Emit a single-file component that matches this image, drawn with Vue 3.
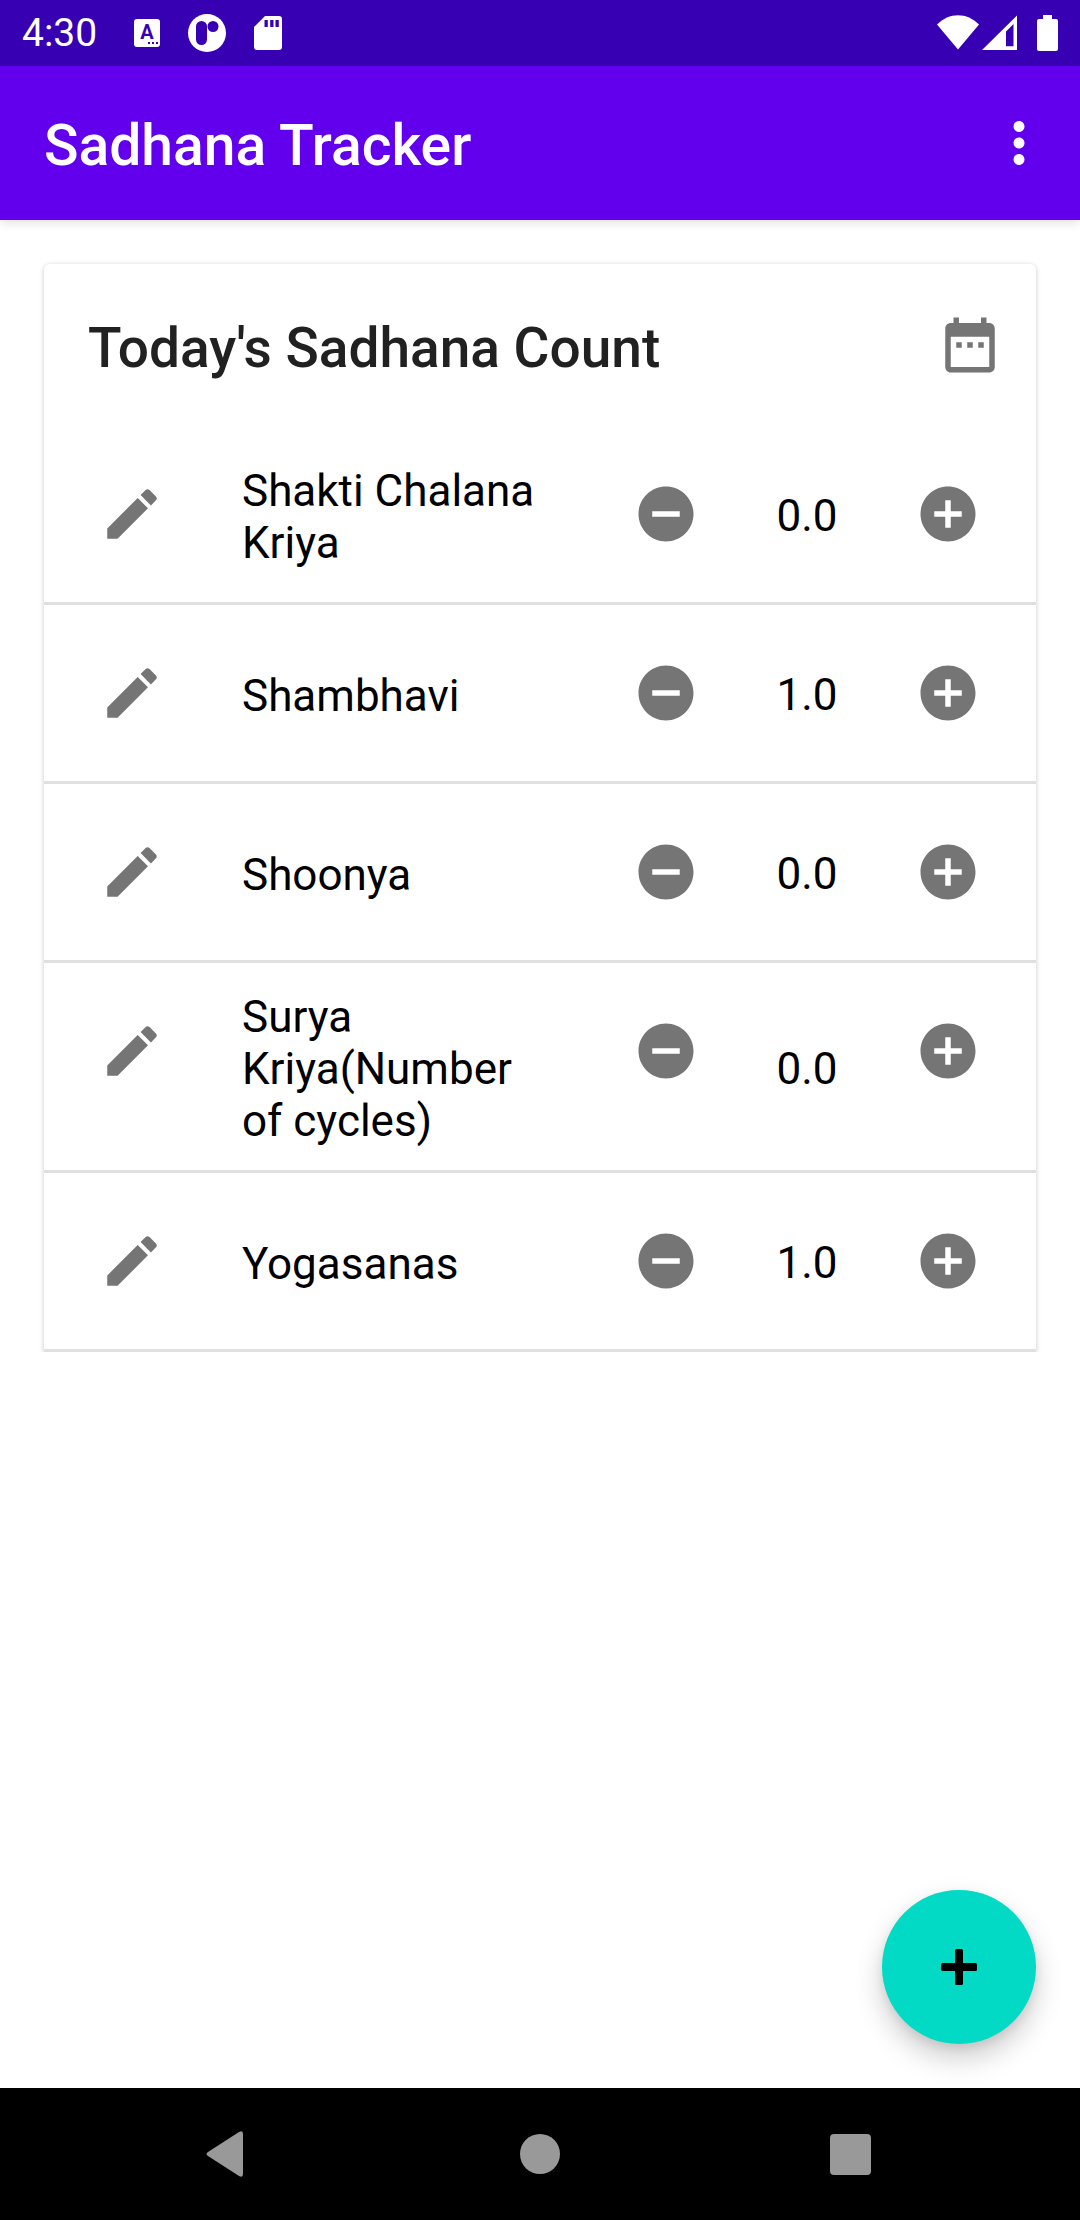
<script setup>
import { ref } from 'vue'

const practices = ref([
  { name: 'Shakti Chalana Kriya', count: 0 },
  { name: 'Shambhavi', count: 1 },
  { name: 'Shoonya', count: 0 },
  { name: 'Surya Kriya(Number of cycles)', count: 0 },
  { name: 'Yogasanas', count: 1 },
])

function change(practice, step) {
  practice.count = Math.max(0, practice.count + step)
}
</script>

<template>
  <div class="screen">
    <header class="top">
      <div class="status">
        <div class="status-left">
          <span class="clock">4:30</span>
          <svg class="letter-icon" width="26" height="28" viewBox="0 0 26 28" aria-hidden="true">
            <rect width="26" height="28" rx="3" fill="#fff" />
            <text x="13" y="20" text-anchor="middle" class="letter">A</text>
            <path d="M14 23h2v2h-2zM18 23h2v2h-2zM22 23h2v2h-2z" fill="#3700b3" />
          </svg>
          <svg class="disc-icon" width="38" height="38" viewBox="0 0 38 38" aria-hidden="true">
            <circle cx="19" cy="19" r="19" fill="#fff" />
            <rect x="8" y="7" width="11" height="24" rx="5.5" fill="#3700b3" />
            <circle cx="25" cy="12.500" r="5.500" fill="#3700b3" />
          </svg>
          <svg width="28" height="34" viewBox="0 0 28 34" aria-hidden="true">
            <path d="M11 0H25a3 3 0 0 1 3 3V31a3 3 0 0 1-3 3H3a3 3 0 0 1-3-3V11zM10.500 4v7h3.300V4zM16.200 4v7h3.300V4zM21.500 4v7h3.300V4z" fill="#fff" fill-rule="evenodd" />
          </svg>
        </div>
        <div class="status-right">
          <svg width="42" height="36" viewBox="0 0 42 36" aria-hidden="true">
            <path d="M0 9.500C12-3 30-3 42 9.500L21 34.500z" fill="#fff" />
          </svg>
          <svg width="35" height="36" viewBox="0 0 35 36" aria-hidden="true">
            <path d="M35 0.500V35H0zM31.500 9L24 16.500V31.300h7.500z" fill="#fff" fill-rule="evenodd" />
          </svg>
          <svg class="battery" width="21" height="36" viewBox="0 0 21 36" aria-hidden="true">
            <path d="M6 0h9v4h4a2 2 0 0 1 2 2V34a2 2 0 0 1-2 2H2a2 2 0 0 1-2-2V6a2 2 0 0 1 2-2h4z" fill="#fff" />
          </svg>
        </div>
      </div>
      <div class="app-bar">
        <h1>Sadhana Tracker</h1>
        <button class="icon-button menu" type="button" aria-label="More options">
          <svg width="66" height="66" viewBox="0 0 24 24"><path d="M12 8c1.100 0 2-.9 2-2s-.9-2-2-2-2 .9-2 2 .9 2 2 2zm0 2c-1.100 0-2 .9-2 2s.9 2 2 2 2-.9 2-2-.9-2-2-2zm0 6c-1.100 0-2 .9-2 2s.9 2 2 2 2-.9 2-2-.9-2-2-2z" /></svg>
        </button>
      </div>
    </header>

    <main>
      <div class="card-area">
        <section class="card">
          <div class="card-head">
            <h2>Today's Sadhana Count</h2>
            <button class="icon-button" type="button" aria-label="Pick a date">
              <svg width="66" height="66" viewBox="0 0 24 24"><path d="M9 11H7v2h2v-2zm4 0h-2v2h2v-2zm4 0h-2v2h2v-2zm2-7h-1V2h-2v2H8V2H6v2H5c-1.110 0-1.990.9-1.990 2L3 20c0 1.100.89 2 2 2h14c1.100 0 2-.9 2-2V6c0-1.100-.9-2-2-2zm0 16H5V9h14v11z" /></svg>
            </button>
          </div>
          <ul>
            <li v-for="practice in practices" :key="practice.name">
              <button class="icon-button cell" type="button" :aria-label="'Edit ' + practice.name">
                <svg width="66" height="66" viewBox="0 0 24 24"><path d="M3 17.250V21h3.750L17.810 9.940l-3.750-3.750L3 17.250zM20.710 7.040c.39-.39.39-1.020 0-1.410l-2.340-2.340c-.39-.39-1.020-.39-1.410 0l-1.830 1.830 3.750 3.750 1.830-1.830z" /></svg>
              </button>
              <span class="name">{{ practice.name }}</span>
              <button class="icon-button cell" type="button" aria-label="Decrease" @click="change(practice, -1)">
                <svg width="66" height="66" viewBox="0 0 24 24"><path d="M12 2C6.480 2 2 6.480 2 12s4.480 10 10 10 10-4.480 10-10S17.520 2 12 2zm5 11H7v-2h10v2z" /></svg>
              </button>
              <output class="count">{{ practice.count.toFixed(1) }}</output>
              <button class="icon-button cell" type="button" aria-label="Increase" @click="change(practice, 1)">
                <svg width="66" height="66" viewBox="0 0 24 24"><path d="M12 2C6.480 2 2 6.480 2 12s4.480 10 10 10 10-4.480 10-10S17.520 2 12 2zm5 11h-4v4h-2v-4H7v-2h4V7h2v4h4v2z" /></svg>
              </button>
            </li>
          </ul>
        </section>
      </div>
      <button class="fab" type="button" aria-label="Add practice">
        <svg width="36" height="36" viewBox="0 0 36 36">
          <rect x="14" width="8" height="36" rx="1.500" />
          <rect y="14" width="36" height="8" rx="1.500" />
        </svg>
      </button>
    </main>

    <nav class="system-nav">
      <button class="icon-button" type="button" aria-label="Back">
        <svg width="66" height="66" viewBox="0 0 66 66"><path d="M46 13v40q0 4-4 2L11 35q-3-2 0-4L42 11q4-2 4 2z" /></svg>
      </button>
      <button class="icon-button" type="button" aria-label="Home">
        <svg width="66" height="66" viewBox="0 0 66 66"><circle cx="33" cy="33" r="20" /></svg>
      </button>
      <button class="icon-button" type="button" aria-label="Recent apps">
        <svg width="66" height="66" viewBox="0 0 66 66"><rect x="13" y="13" width="41" height="41" rx="4" /></svg>
      </button>
    </nav>
  </div>
</template>

<style>
body {
  margin: 0;
  background: #fff;
}
</style>

<style scoped>
.screen {
  display: flex;
  flex-direction: column;
  min-height: 100vh;
  font-family: Roboto, "Noto Sans", sans-serif;
  color: #000;
}
svg {
  display: block;
  flex: none;
}
.icon-button {
  display: flex;
  align-items: center;
  justify-content: center;
  flex: none;
  padding: 0;
  border: 0;
  background: none;
  fill: #757575;
  cursor: pointer;
}
.top {
  background: #6200ee;
  color: #fff;
  box-shadow: 0 2px 10px rgba(0, 0, 0, 0.14);
}
.status {
  display: flex;
  align-items: center;
  justify-content: space-between;
  height: 66px;
  padding: 0 22px;
  background: #3700b3;
}
.status-left,
.status-right {
  display: flex;
  align-items: center;
}
.clock {
  width: 112px;
  font-size: 39px;
  line-height: 66px;
}
.letter {
  font-size: 20px;
  font-weight: 700;
  fill: #3700b3;
}
.letter-icon,
.disc-icon {
  margin-right: 28px;
}
.status-right {
  gap: 3px;
}
.battery {
  margin-left: 17px;
}
.app-bar {
  display: flex;
  align-items: center;
  justify-content: space-between;
  height: 154px;
  padding: 0 28px 0 44px;
}
h1,
h2 {
  margin: 0;
  padding-top: 6px;
  line-height: 66px;
  font-weight: 500;
}
h1 {
  font-size: 57px;
}
h2 {
  font-size: 55px;
  color: #212121;
}
.menu {
  fill: #fff;
}
main {
  position: relative;
  flex: 1;
}
.card-area {
  padding: 44px 44px 0;
  overflow: hidden;
}
.card {
  border-radius: 6px 6px 0 0;
  box-shadow: 0 1px 5px rgba(0, 0, 0, 0.22);
}
.card-head {
  display: flex;
  align-items: center;
  justify-content: space-between;
  height: 162px;
  padding: 0 33px 0 44px;
}
ul {
  margin: 0;
  padding: 0;
  list-style: none;
}
li {
  display: flex;
  align-items: center;
  min-height: 176px;
  border-bottom: 3px solid #e0e0e0;
  font-size: 44px;
  line-height: 52px;
}
.cell {
  align-self: flex-start;
  width: 176px;
  height: 176px;
}
.name {
  flex: 1;
  padding: 28px 33px 23px 22px;
}
.count {
  width: 106px;
  padding-top: 4px;
  text-align: center;
}
.fab {
  position: absolute;
  right: 44px;
  bottom: 44px;
  display: flex;
  align-items: center;
  justify-content: center;
  width: 154px;
  height: 154px;
  padding: 0;
  border: 0;
  border-radius: 50%;
  background: #03dac5;
  box-shadow: 0 14px 28px rgba(0, 0, 0, 0.2), 0 4px 10px rgba(0, 0, 0, 0.08);
  cursor: pointer;
}
.system-nav {
  display: flex;
  align-items: center;
  justify-content: center;
  gap: 244px;
  height: 132px;
  background: #000;
}
.system-nav .icon-button {
  fill: #999;
}
</style>
